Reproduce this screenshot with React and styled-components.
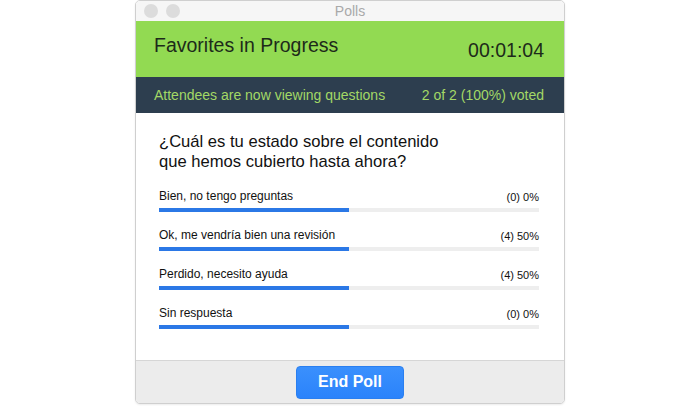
import React from "react";
import styled, { createGlobalStyle } from "styled-components";

const Global = createGlobalStyle`
  html, body { margin: 0; padding: 0; background: #ffffff; }
  body { font-family: "Liberation Sans", Arial, Helvetica, sans-serif; }
  * { box-sizing: border-box; }
`;

const Page = styled.div`
  width: 700px;
  height: 406px;
  display: flex;
  justify-content: center;
  align-items: flex-start;
`;

const Window = styled.div`
  width: 430px;
  border: 1px solid #cfcfcf;
  border-radius: 5px;
  overflow: hidden;
  display: flex;
  flex-direction: column;
  background: #ffffff;
  box-shadow: 0 1px 2px rgba(0, 0, 0, 0.08);
`;

const TitleBar = styled.div`
  height: 20px;
  background: #f6f6f6;
  display: grid;
  grid-template-columns: 1fr auto 1fr;
  align-items: center;
  padding: 0 8px;
`;

const Lights = styled.div`
  display: flex;
  gap: 8px;
`;

const Light = styled.span`
  width: 14px;
  height: 14px;
  border-radius: 50%;
  background: #dcdcdc;
`;

const WindowTitle = styled.div`
  font-size: 14px;
  line-height: 20px;
  color: #a9a9a9;
`;

const Header = styled.div`
  height: 56px;
  background: #92da52;
  display: flex;
  justify-content: space-between;
  align-items: flex-start;
  padding: 0 20px 0 18px;
  color: #1d2a1a;
  font-size: 19.5px;
  line-height: 22px;
`;

const PollName = styled.div`
  padding-top: 13px;
`;

const Timer = styled.div`
  padding-top: 18px;
`;

const Status = styled.div`
  height: 36px;
  background: #2d3e4f;
  display: flex;
  justify-content: space-between;
  align-items: center;
  padding: 0 20px 0 18px;
  color: #a3d866;
  font-size: 14px;
`;

const Body = styled.div`
  height: 247px;
  padding: 19px 25px 0 23px;
  display: flex;
  flex-direction: column;
`;

const Question = styled.div`
  font-size: 16.6px;
  line-height: 20px;
  color: #111111;
  max-width: 300px;
  margin-bottom: 16px;
`;

const Options = styled.div`
  display: flex;
  flex-direction: column;
  gap: 15px;
`;

const Option = styled.div`
  display: flex;
  flex-direction: column;
  gap: 4px;
`;

const OptionHead = styled.div`
  display: flex;
  justify-content: space-between;
  align-items: flex-end;
  font-size: 12px;
  line-height: 16px;
  color: #111111;
`;

const Count = styled.span`
  font-size: 11px;
  line-height: 14px;
`;

const Track = styled.div`
  height: 4px;
  background: #eeeeee;
  display: flex;
`;

const Fill = styled.div`
  height: 100%;
  background: #2b78e6;
`;

const Footer = styled.div`
  height: 43px;
  border-top: 1px solid #d6d6d6;
  background: #ececec;
  display: flex;
  justify-content: center;
  align-items: center;
`;

const Button = styled.button`
  width: 108px;
  height: 33px;
  border: 1px solid #2a7ff0;
  border-radius: 4px;
  background: linear-gradient(#3a90fd, #2b83fb);
  color: #ffffff;
  font-family: "Liberation Sans", Arial, sans-serif;
  font-weight: bold;
  font-size: 16px;
  cursor: pointer;
`;

const options = [
  { label: "Bien, no tengo preguntas", count: "(0) 0%", fill: 50 },
  { label: "Ok, me vendría bien una revisión", count: "(4) 50%", fill: 50 },
  { label: "Perdido, necesito ayuda", count: "(4) 50%", fill: 50 },
  { label: "Sin respuesta", count: "(0) 0%", fill: 50 },
];

export default function App() {
  return (
    <>
      <Global />
      <Page>
        <Window>
          <TitleBar>
            <Lights>
              <Light />
              <Light />
            </Lights>
            <WindowTitle>Polls</WindowTitle>
            <span />
          </TitleBar>
          <Header>
            <PollName>Favorites in Progress</PollName>
            <Timer>00:01:04</Timer>
          </Header>
          <Status>
            <span>Attendees are now viewing questions</span>
            <span>2 of 2 (100%) voted</span>
          </Status>
          <Body>
            <Question>¿Cuál es tu estado sobre el contenido que hemos cubierto hasta ahora?</Question>
            <Options>
              {options.map((o) => (
                <Option key={o.label}>
                  <OptionHead>
                    <span>{o.label}</span>
                    <Count>{o.count}</Count>
                  </OptionHead>
                  <Track>
                    <Fill style={{ width: `${o.fill}%` }} />
                  </Track>
                </Option>
              ))}
            </Options>
          </Body>
          <Footer>
            <Button>End Poll</Button>
          </Footer>
        </Window>
      </Page>
    </>
  );
}
